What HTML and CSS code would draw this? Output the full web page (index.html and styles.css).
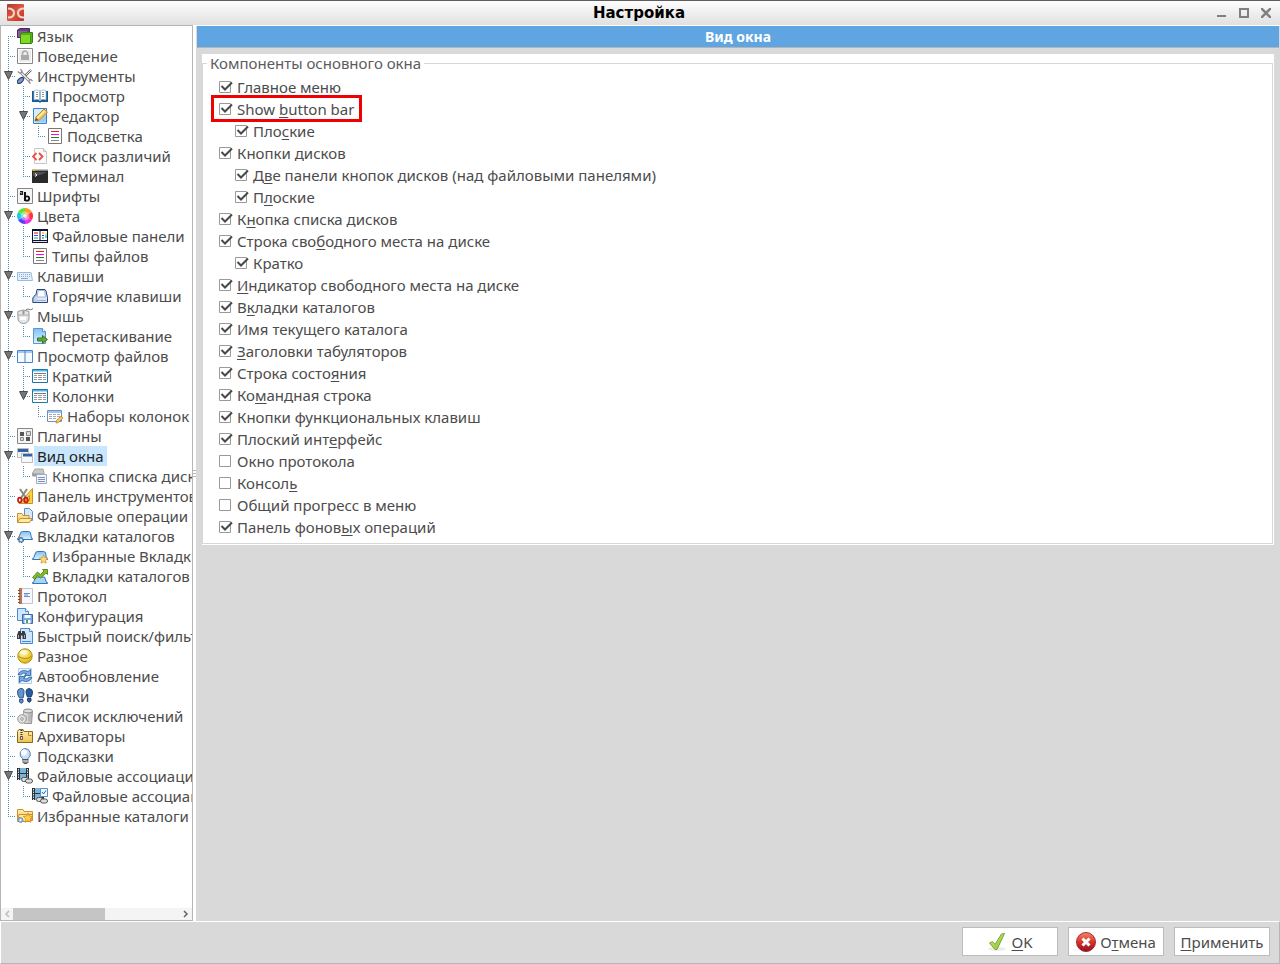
FILE: index.html
```html
<!DOCTYPE html>
<html lang="ru">
  <head>
    <meta charset="UTF-8" />
    <meta name="viewport" content="width=device-width, initial-scale=1.0" />
    <title>Настройка</title>
    <link rel="stylesheet" href="styles.css">
  </head>
  <body>
    <!-- icon set, 16x16 -->
    <svg class="icon-defs" width="0" height="0">
      <defs>
        <linearGradient id="gRed" x1="0" y1="0" x2="0" y2="1"><stop offset="0" stop-color="#f08a6a"/><stop offset=".5" stop-color="#d8332c"/><stop offset="1" stop-color="#8c1024"/></linearGradient>
        <linearGradient id="gApp" x1="0" y1="0" x2="1" y2="1"><stop offset="0" stop-color="#a8382c"/><stop offset=".5" stop-color="#e0543c"/><stop offset="1" stop-color="#b83020"/></linearGradient>
        <linearGradient id="gGreen" x1="0" y1="0" x2="1" y2="1"><stop offset="0" stop-color="#d8f070"/><stop offset="1" stop-color="#8aba34"/></linearGradient>
        <linearGradient id="gBlue" x1="0" y1="0" x2="0" y2="1"><stop offset="0" stop-color="#7fc0f4"/><stop offset="1" stop-color="#e0f2ff"/></linearGradient>
        <linearGradient id="gGrey" x1="0" y1="0" x2="1" y2="0"><stop offset="0" stop-color="#f4f4f4"/><stop offset="1" stop-color="#a8a8a8"/></linearGradient>
        <linearGradient id="gFolder" x1="0" y1="0" x2="0" y2="1"><stop offset="0" stop-color="#fff0b4"/><stop offset="1" stop-color="#f0c050"/></linearGradient>
        <radialGradient id="gYellow" cx=".4" cy=".3" r=".7"><stop offset="0" stop-color="#fff9a0"/><stop offset="1" stop-color="#e0b410"/></radialGradient>
      </defs>
      <symbol id="language" viewBox="0 0 16 16"><path d="M.5 2 3 .5h9.500v9H.5z" fill="#6a3f80" stroke="#4a2860"/><path d="M1 3h9v6H1z" fill="#8d5a9a"/><path d="M3.500 6 5.500 4.500h10V14l-1 1.500h-11z" fill="#58b018" stroke="#3a8010"/><path d="M4 7h9v8H4z" fill="#80d828"/><path d="M13.500 6.500V15" stroke="#4a9a14"/></symbol>
      <symbol id="lock" viewBox="0 0 16 16"><path d="M.5.5h15v15H.5z" fill="#ececec" stroke="#888"/><path d="M1.500 1.500h13v13h-13z" fill="none" stroke="#fff"/><path d="M4 7h8v5H4z" fill="#aaa"/><path d="M5.500 7V5.500a2.500 2.500 0 0 1 5 0V7" fill="none" stroke="#aaa" stroke-width="1.500"/></symbol>
      <symbol id="tools" viewBox="0 0 16 16"><path d="M14 2 6 10" stroke="#666" stroke-width="2.400"/><path d="M14 2 6 10" stroke="#eee" stroke-width="1"/><path d="M3.500 4 12.500 13" stroke="#777" stroke-width="3"/><path d="M3.500 4 12.500 13" stroke="#f0f0f0" stroke-width="1.500"/><path d="M.8 3.500 2.500 5q2.500.5 2.500-2L3.500 1M15.500 13 14 11.500q-2.500 0-2 2.500l1.500 1.500" fill="none" stroke="#888" stroke-width="1.200"/><ellipse cx="3.500" cy="12.500" rx="3.800" ry="2.100" transform="rotate(-42 3.500 12.500)" fill="#7898c8" stroke="#243c68"/></symbol>
      <symbol id="book" viewBox="0 0 16 16"><path d="M0 3h16v11H9l-1 1-1-1H0z" fill="#1c5a8e"/><path d="M2 2.500Q5 1 8 3v9.500Q5 10.500 2 12zM14 2.500Q11 1 8 3v9.500q3-2 6-.5z" fill="#fff" stroke="#88b4d4" stroke-width=".7"/><path d="M4 4.500h2m-2 2h2m-2 2h2m4-4h2m-2 2h2m-2 2h2" stroke="#999"/><path d="M8 3v10" stroke="#8aa"/></symbol>
      <symbol id="edit" viewBox="0 0 16 16"><path d="M1.500.5h13v15h-13z" fill="#d6ebfd" stroke="#3f82c4"/><path d="M3 14.500 14 6v8.500z" fill="#9ccaf2"/><path d="m3 13 1-4 8-8 3.500 3-8 8z" fill="#f4c85c" stroke="#c08820"/><path d="m5.500 10 7-7" stroke="#fff0b0" stroke-width="1.500"/><path d="m3 13 1-3 2.500 2z" fill="#7a4a20"/></symbol>
      <symbol id="lines" viewBox="0 0 16 16"><path d="M1.500.5h13v15h-13z" fill="#fff" stroke="#777"/><path d="M4 3.500h8" stroke="#f02020"/><path d="M4 6.500h8" stroke="#f0f"/><path d="M4 9.500h8" stroke="#188818"/><path d="M4 12.500h8" stroke="#888"/></symbol>
      <symbol id="diff" viewBox="0 0 16 16"><path d="M2.500.5h9l3 3v12h-12z" fill="#fafafa" stroke="#c8c8c8"/><path d="M11.500.5v3h3" fill="#ddd" stroke="#c8c8c8"/><path d="M4.500 5 1 8.500 4.500 12M7 5l3.500 3.500L7 12" fill="none" stroke="#ee4c48" stroke-width="1.800"/></symbol>
      <symbol id="terminal" viewBox="0 0 16 16"><path d="M0 2h16v13H0z" fill="#2b2b2b"/><path d="M0 1.500h16V3H0z" fill="#888"/><path d="M1 1h2v2H1z" fill="#e8c020"/><path d="M1 8Q8 8 15 4H1z" fill="#505050"/><path d="m3 5.500 2 1.500-2 1.500" fill="none" stroke="#fff"/></symbol>
      <symbol id="fonts" viewBox="0 0 16 16"><path d="M.5.5h15v15H.5z" fill="#f4f4f4" stroke="#888"/><path d="M3 3.500h2.500v3.500M5.500 5H3.500v1.500h2" fill="none" stroke="#222" stroke-width="1.200"/><path d="M8 4v9" stroke="#111" stroke-width="2"/><circle cx="10" cy="10.500" r="2.200" fill="none" stroke="#111" stroke-width="1.800"/></symbol>
      <symbol id="colors" viewBox="0 0 16 16"><path d="M8 8V0a8 8 0 0 1 6.900 4z" fill="#ff9a28"/><path d="m8 8 6.900-4a8 8 0 0 1 0 8z" fill="#ff3048"/><path d="m8 8 6.900 4A8 8 0 0 1 8 16z" fill="#f42ce0"/><path d="M8 8v8a8 8 0 0 1-6.900-4z" fill="#5a40f0"/><path d="m8 8-6.900 4a8 8 0 0 1 0-8z" fill="#20c8e8"/><path d="M8 8 1.100 4A8 8 0 0 1 8 0z" fill="#58e830"/><circle cx="8" cy="8" r="4.500" fill="#fff" opacity=".4"/><circle cx="8" cy="8" r="2" fill="#fff" opacity=".7"/></symbol>
      <symbol id="panels" viewBox="0 0 16 16"><path d="M.5 1.500h15v13H.5z" fill="#fff" stroke="#111136"/><path d="M0 1h16v2H0zM0 12h16v3H0z" fill="#111136"/><path d="M8 2v11" stroke="#111136"/><path d="M1 13.500h14" stroke="#ddd"/><path d="M2 5h4" stroke="#e00"/><path d="M2 7.500h4" stroke="#4b4bff"/><path d="M2 10h4" stroke="#0a8"/><path d="M10 5h2" stroke="#e80"/><path d="M10 7.500h2" stroke="#22f"/><path d="M10 10h2" stroke="#080"/><path d="M13 5h2v2h-2z" fill="#fe2"/><path d="M13 7h2v3h-2z" fill="#6cf"/></symbol>
      <symbol id="keyboard" viewBox="0 0 16 16"><path d="M.5 4.500H14l1.500 8H.5z" fill="#e4effb" stroke="#9abade"/><path d="M2 6.500h11M2 8.500h12" stroke="#88a8cc" stroke-dasharray="1 1"/><path d="M4 10.500h7" stroke="#88a8cc"/></symbol>
      <symbol id="hotkeys" viewBox="0 0 16 16"><path d="M5 1.500h8l1 1.500 1.500 6.500v5H3.500V9z" fill="#dce8f8" stroke="#24487c"/><path d="M6 2.500h6.500l1 6.500h-8.500z" fill="#fff" stroke="#a4b8d8"/><path d="M3.500 6.500.8 10v4.500h5" fill="#bcd0ec" stroke="#24487c"/><path d="M5 12.500h9" stroke="#9ab0d0"/></symbol>
      <symbol id="mouse" viewBox="0 0 16 16"><path d="M10 3q-2-2 1-2 3 2 5-.5" fill="none" stroke="#777"/><path d="M.8 3.500Q6 .5 12 3.500V11q-1 4.500-5.500 4.500T1 11z" fill="#e6e6e6" stroke="#999"/><path d="M1 7h11M6.500 2v5" stroke="#aaa"/><path d="M5.500 3h2v3h-2z" fill="#999"/><path d="M3 9h6v3H3z" fill="#fff"/></symbol>
      <symbol id="drag" viewBox="0 0 16 16"><path d="M1.500.5h9l3 3v12h-12z" fill="url(#gBlue)" stroke="#5a96d4"/><path d="M10.500.5v3h3" fill="#fff" stroke="#5a96d4"/><path d="M5.500 10h5V7.500l5 4-5 4V13h-5z" fill="#62a838" stroke="#38741c"/></symbol>
      <symbol id="view" viewBox="0 0 16 16"><path d="M.5 2.500h15v12H.5z" fill="#f6faff" stroke="#4a84c8"/><path d="M1 3h14v2H1z" fill="#a4c8f0"/><path d="M8 3v11" stroke="#4a84c8"/></symbol>
      <symbol id="columns" viewBox="0 0 16 16"><path d="M.5 1.500h15v13H.5z" fill="#fff" stroke="#1c78a8"/><path d="M1 2h14v1.500H1z" fill="#58b4e4"/><path d="M2 5.500h12" stroke="#777"/><path d="M2 7.500h3m1 0h4m1 0h3M2 9.500h3m1 0h4m1 0h3M2 11.500h3m1 0h4m1 0h3" stroke="#999"/></symbol>
      <symbol id="colsets" viewBox="0 0 16 16"><path d="M.5 2.500h14v11H.5z" fill="#fff" stroke="#6a94c8"/><path d="M1 3h13v2H1z" fill="#a4c4ec"/><path d="M2 6.500h3m1 0h3m1 0h3M2 8.500h3m1 0h3m1 0h3M2 10.500h3m1 0h3" stroke="#aab"/><path d="m9 15 .5-2.500L14 8l2 2-4.500 4.500z" fill="#f4c85c" stroke="#b88428" stroke-width=".8"/></symbol>
      <symbol id="plugins" viewBox="0 0 16 16"><path d="M.5.5h15v15H.5z" fill="#f4f4f4" stroke="#888"/><path d="M3 4h4v4H3z" fill="#555"/><path d="M9.500 3.500h4v4h-4zM3.500 9.500h3v3h-3z" fill="#ddd" stroke="#888"/><path d="M9 9h4v4H9z" fill="#555"/></symbol>
      <symbol id="windows" viewBox="0 0 16 16"><path d="M.5.5h11v9H.5z" fill="#f2f2f2" stroke="#bbb"/><path d="M1 1h10v3H1z" fill="#2f62a8"/><path d="M4.500 5.500h11v9h-11z" fill="#f8f8f8" stroke="#bbb"/><path d="M6 6h9v2.500H6z" fill="#2f62a8"/></symbol>
      <symbol id="drives" viewBox="0 0 16 16"><path d="m.5 5 2.500-4h8l1 4v3H.5z" fill="#c8c8c8" stroke="#a4a4a4"/><path d="M1 5.500h10V8H1z" fill="#999"/><path d="M4.500 6.500h10v9h-10z" fill="#f4f4ff" stroke="#a0acc4"/><path d="M6 9.500h7m-7 2h7m-7 2h7" stroke="#8090b4"/></symbol>
      <symbol id="toolbar" viewBox="0 0 16 16"><path d="M15.500.5v15H2z" fill="#f8d040" stroke="#c89418"/><path d="M12.500 7.500v5h-4z" fill="#fff" stroke="#c89418"/><path d="M3 1l6 9M10 1 4 10" stroke="#888" stroke-width="2"/><ellipse cx="2.800" cy="12" rx="1.800" ry="2.400" fill="none" stroke="#c81c1c" stroke-width="1.800"/><ellipse cx="9" cy="12" rx="1.800" ry="2.400" fill="none" stroke="#c81c1c" stroke-width="1.800"/></symbol>
      <symbol id="fileops" viewBox="0 0 16 16"><path d="M7.500.5h5l3 3v9h-8z" fill="#d4e8fc" stroke="#5a90cc"/><path d="M.5 5.500H5l1 2h6v7H.5z" fill="url(#gFolder)" stroke="#c89030"/><path d="M3 10.500h12l-2.500 4H.5z" fill="#ffeaa0" stroke="#c89030"/></symbol>
      <symbol id="tabs" viewBox="0 0 16 16"><path d="M.5 10.500h1L3.500 5q.5-1.500 2-1.500h6q1.500 0 2 1.500l1 5.500h1v1H.5z" fill="url(#gBlue)" stroke="#2f78bc"/><circle cx="4" cy="12" r="2.600" fill="#6898c8" stroke="#2c5484" stroke-dasharray="1.500 1"/><circle cx="4" cy="12" r="1" fill="#fff"/><path d="M1 9.500 3 9" stroke="#d07820" stroke-width="1.500"/></symbol>
      <symbol id="favtabs" viewBox="0 0 16 16"><path d="M.5 10.500h1L3.500 5q.5-1.500 2-1.500h6q1.500 0 2 1.500l1 5.500h1v1H.5z" fill="url(#gBlue)" stroke="#2f78bc"/><path d="m11.500 7 1.300 2.700 3 .4-2.200 2.100.5 3-2.600-1.400L9 15.200l.5-3-2.200-2.100 3-.4z" fill="#ffdc70" stroke="#d49428" stroke-width=".8"/></symbol>
      <symbol id="foldertabs" viewBox="0 0 16 16"><path d="M.5 14.500h1L3.500 9h9l2 5.500h1v1H.5z" fill="#a8d4f4" stroke="#2f78bc"/><path d="m.5 9.500 5-5.500 3 2.500L12 3l-1.500-1.500H15.500V6.500L14 5 8.500 10l-3-2.500-2.500 4z" fill="#80c024" stroke="#44760c" stroke-width=".8"/></symbol>
      <symbol id="protocol" viewBox="0 0 16 16"><path d="M2.500.5h13v15h-13z" fill="#f6f8fc" stroke="#c4c4cc"/><path d="M2 0h3v16H2z" fill="#b87850"/><path d="M1 2.500h2m-2 3h2m-2 3h2m-2 3h2m-2 3h2" stroke="#774430"/><path d="M7 5.500h6m-6 3h6M7 7h4" stroke="#6a90cc"/></symbol>
      <symbol id="config" viewBox="0 0 16 16"><path d="M.5.5h8l3 3v9H.5z" fill="#d0e6fc" stroke="#4a8cd0"/><path d="M8.500.5v3h3" fill="#fff" stroke="#4a8cd0"/><path d="M5.500 6.500h10v9h-10z" fill="#78a8e0" stroke="#386cb0"/><path d="M7.500 7h6v3h-6zM7.500 12h6v3.500h-6z" fill="#fff"/><path d="M9 12h2v3H9z" fill="#58a048"/></symbol>
      <symbol id="search" viewBox="0 0 16 16"><path d="M3.500.5h9l3 3v12h-12z" fill="#d0e6fc" stroke="#4a8cd0"/><path d="M12.500.5v3h3" fill="#fff" stroke="#4a8cd0"/><path d="M5 13.500h9" stroke="#4a8cd0"/><path d="M1.500 3h2.500v2h1V3h2.500l1.500 4v4H5.500V7.500H4V11H0V7z" fill="#3a3a44"/><path d="M1.500 7v3m6-3v3" stroke="#aab"/></symbol>
      <symbol id="misc" viewBox="0 0 16 16"><circle cx="8" cy="8" r="7.200" fill="url(#gYellow)" stroke="#b48c10"/><path d="M1.500 8.500q6.500 4 13 0" stroke="#b88c08" fill="none"/><ellipse cx="7" cy="4.500" rx="4" ry="2.300" fill="#fff" opacity=".65"/></symbol>
      <symbol id="update" viewBox="0 0 16 16"><path d="M1.500.5h13v15h-13z" fill="#eaf4ff" stroke="#b4d0ee"/><path d="M1 6.500Q4.500.5 11 3.500L13.500 1.500v6h-6l2-2Q6 4 3.500 7zM15 9.500q-3.500 6-10 3l-2.500 2v-6h6l-2 2q3.500 1.500 6-1.500z" fill="#7aaee4" stroke="#2a5c98" stroke-width=".8"/></symbol>
      <symbol id="feet" viewBox="0 0 16 16"><path d="M3.500.5Q7 0 7 4q0 3-1 6H2.500Q.5 7 .5 4t3-3.500z" fill="#6494cc" stroke="#285488"/><path d="M2.500 11.500H6v2.500q-1.800 2.500-3.500 0z" fill="#6494cc" stroke="#285488"/><path d="M12 .5q3.500.5 3.500 3.500T14 9h-3.500q-1.500-3-1.500-5.500T12 .5z" fill="#285c9c" stroke="#1c3c70"/><path d="M10.500 10.500H14V13q-1.800 2.500-3.500 0z" fill="#285c9c" stroke="#1c3c70"/></symbol>
      <symbol id="ignore" viewBox="0 0 16 16"><path d="M6.500 3.500h9l-1 12h-7z" fill="url(#gGrey)" stroke="#999"/><ellipse cx="11" cy="3" rx="4.500" ry="2" fill="#ddd" stroke="#888"/><path d="M9 7v6m3-6v6" stroke="#aaa"/><circle cx="5" cy="11" r="4.300" fill="#e0e0e0" stroke="#999"/><circle cx="5" cy="11" r="1.300" fill="#fff" stroke="#999"/></symbol>
      <symbol id="archive" viewBox="0 0 16 16"><path d="M.5 3.500 2 1.500h4l1 2h8.500v11H.5z" fill="url(#gFolder)" stroke="#8c6818"/><path d="M11.500 4v3.500h3" fill="none" stroke="#b48828"/><path d="M4.500 2v8" stroke="#333" stroke-width="2" stroke-dasharray="1 1"/><path d="M3.500 8.500h2v3h-2z" fill="#ddd" stroke="#444" stroke-width=".8"/></symbol>
      <symbol id="bulb" viewBox="0 0 16 16"><path d="M8 .5a5.500 5.500 0 0 1 3 10V12H5.500v-1.500A5.500 5.500 0 0 1 8 .5z" fill="#c8defa" stroke="#5c7cb4"/><ellipse cx="7" cy="4.500" rx="3" ry="3" fill="#fff"/><path d="M6 11.500h5v3l-1 1H7l-1-1z" fill="#888" stroke="#444" stroke-width=".8"/><path d="M6 13h5" stroke="#ddd"/></symbol>
      <symbol id="assoc" viewBox="0 0 16 16"><path d="M0 0h12v12H0z" fill="#2c3438"/><path d="M3 0h6v5H3zM3 6h6v6H3z" fill="#78b4dc"/><path d="M1.500 1v11m9-11v11" stroke="#ddd" stroke-dasharray="1.500 1"/><rect x="4.500" y="9.500" width="7" height="4" rx="2" fill="#ddd" stroke="#555"/><rect x="8.500" y="11" width="7" height="4" rx="2" fill="#ddd" stroke="#555"/></symbol>
      <symbol id="assoc2" viewBox="0 0 16 16"><path d="M0 0h12v12H0z" fill="#2c3438"/><path d="M3 0h6v5H3zM3 6h6v6H3z" fill="#78b4dc"/><path d="M1.500 1v11" stroke="#ddd" stroke-dasharray="1.500 1"/><path d="M8.500.5h7v8h-7z" fill="#f4faff" stroke="#5a90c0"/><path d="m10 4 1.500 2L14 2.500" fill="none" stroke="#2a64b0"/><rect x="4.500" y="9.500" width="6" height="4" rx="2" fill="#ddd" stroke="#555"/><rect x="8.500" y="11" width="7" height="4" rx="2" fill="#ddd" stroke="#555"/></symbol>
      <symbol id="favdirs" viewBox="0 0 16 16"><path d="M.5 1.500H6l1 2h8.500v9H.5z" fill="url(#gFolder)" stroke="#d09030"/><path d="M2 6.500h13.500l-2 7H.5z" fill="#ffeaa0" stroke="#d09030"/><path d="m11 5 1.400 3 3.300.4-2.400 2.400.6 3.500-2.900-1.700-3 1.700.7-3.500-2.500-2.400L9.600 8z" fill="#ffd050" stroke="#d08820" stroke-width=".8"/><circle cx="3.500" cy="12" r="2.500" fill="#88b8e4" stroke="#3c78b4" stroke-dasharray="1.500 1"/><circle cx="3.500" cy="12" r="1" fill="#fff"/></symbol>
      <symbol id="caret" viewBox="0 0 10 10"><path d="M.5.5h8L4.500 8.500z" fill="#777" stroke="#4c4c4c"/></symbol>
    </svg>

    <header class="titlebar">
      <svg class="app-icon" viewBox="0 0 18 18"><rect width="17" height="17" rx="1" fill="url(#gApp)"/><path d="M1 4.500q6 0 6 4.500t-6 4.500M17 4.500q-6 0-6 4.500t6 4.500" fill="none" stroke="#f0d8d0" stroke-width="2"/></svg>
      <h1>Настройка</h1>
      <div class="window-buttons">
        <button type="button" aria-label="Свернуть"><svg viewBox="0 0 10 10"><path d="M0 7h9v2H0z" fill="#808080"/></svg></button>
        <button type="button" aria-label="Развернуть"><svg viewBox="0 0 10 10"><path d="M1 1h8v8H1z" fill="none" stroke="#808080" stroke-width="2"/></svg></button>
        <button type="button" aria-label="Закрыть"><svg viewBox="0 0 10 10"><path d="m0 0 10 10M10 0 0 10" stroke="#808080" stroke-width="2.500"/></svg></button>
      </div>
    </header>

    <main class="content">
      <nav class="sidebar">
        <ul class="tree">
          <li><div class="node"><a href="#"><svg><use href="#language"/></svg><span>Язык</span></a></div></li>
          <li><div class="node"><a href="#"><svg><use href="#lock"/></svg><span>Поведение</span></a></div></li>
          <li>
            <div class="node"><button type="button" class="caret" aria-label="Свернуть ветку"><svg><use href="#caret"/></svg></button><a href="#"><svg><use href="#tools"/></svg><span>Инструменты</span></a></div>
            <ul>
              <li><div class="node"><a href="#"><svg><use href="#book"/></svg><span>Просмотр</span></a></div></li>
              <li>
                <div class="node"><button type="button" class="caret" aria-label="Свернуть ветку"><svg><use href="#caret"/></svg></button><a href="#"><svg><use href="#edit"/></svg><span>Редактор</span></a></div>
                <ul>
                  <li><div class="node"><a href="#"><svg><use href="#lines"/></svg><span>Подсветка</span></a></div></li>
                </ul>
              </li>
              <li><div class="node"><a href="#"><svg><use href="#diff"/></svg><span>Поиск различий</span></a></div></li>
              <li><div class="node"><a href="#"><svg><use href="#terminal"/></svg><span>Терминал</span></a></div></li>
            </ul>
          </li>
          <li><div class="node"><a href="#"><svg><use href="#fonts"/></svg><span>Шрифты</span></a></div></li>
          <li>
            <div class="node"><button type="button" class="caret" aria-label="Свернуть ветку"><svg><use href="#caret"/></svg></button><a href="#"><svg><use href="#colors"/></svg><span>Цвета</span></a></div>
            <ul>
              <li><div class="node"><a href="#"><svg><use href="#panels"/></svg><span>Файловые панели</span></a></div></li>
              <li><div class="node"><a href="#"><svg><use href="#lines"/></svg><span>Типы файлов</span></a></div></li>
            </ul>
          </li>
          <li>
            <div class="node"><button type="button" class="caret" aria-label="Свернуть ветку"><svg><use href="#caret"/></svg></button><a href="#"><svg><use href="#keyboard"/></svg><span>Клавиши</span></a></div>
            <ul>
              <li><div class="node"><a href="#"><svg><use href="#hotkeys"/></svg><span>Горячие клавиши</span></a></div></li>
            </ul>
          </li>
          <li>
            <div class="node"><button type="button" class="caret" aria-label="Свернуть ветку"><svg><use href="#caret"/></svg></button><a href="#"><svg><use href="#mouse"/></svg><span>Мышь</span></a></div>
            <ul>
              <li><div class="node"><a href="#"><svg><use href="#drag"/></svg><span>Перетаскивание</span></a></div></li>
            </ul>
          </li>
          <li>
            <div class="node"><button type="button" class="caret" aria-label="Свернуть ветку"><svg><use href="#caret"/></svg></button><a href="#"><svg><use href="#view"/></svg><span>Просмотр файлов</span></a></div>
            <ul>
              <li><div class="node"><a href="#"><svg><use href="#columns"/></svg><span>Краткий</span></a></div></li>
              <li>
                <div class="node"><button type="button" class="caret" aria-label="Свернуть ветку"><svg><use href="#caret"/></svg></button><a href="#"><svg><use href="#columns"/></svg><span>Колонки</span></a></div>
                <ul>
                  <li><div class="node"><a href="#"><svg><use href="#colsets"/></svg><span>Наборы колонок</span></a></div></li>
                </ul>
              </li>
            </ul>
          </li>
          <li><div class="node"><a href="#"><svg><use href="#plugins"/></svg><span>Плагины</span></a></div></li>
          <li>
            <div class="node selected"><button type="button" class="caret" aria-label="Свернуть ветку"><svg><use href="#caret"/></svg></button><a href="#"><svg><use href="#windows"/></svg><span>Вид окна</span></a></div>
            <ul>
              <li><div class="node"><a href="#"><svg><use href="#drives"/></svg><span>Кнопка списка дисков</span></a></div></li>
            </ul>
          </li>
          <li><div class="node"><a href="#"><svg><use href="#toolbar"/></svg><span>Панель инструментов</span></a></div></li>
          <li><div class="node"><a href="#"><svg><use href="#fileops"/></svg><span>Файловые операции</span></a></div></li>
          <li>
            <div class="node"><button type="button" class="caret" aria-label="Свернуть ветку"><svg><use href="#caret"/></svg></button><a href="#"><svg><use href="#tabs"/></svg><span>Вкладки каталогов</span></a></div>
            <ul>
              <li><div class="node"><a href="#"><svg><use href="#favtabs"/></svg><span>Избранные Вкладки</span></a></div></li>
              <li><div class="node"><a href="#"><svg><use href="#foldertabs"/></svg><span>Вкладки каталогов</span></a></div></li>
            </ul>
          </li>
          <li><div class="node"><a href="#"><svg><use href="#protocol"/></svg><span>Протокол</span></a></div></li>
          <li><div class="node"><a href="#"><svg><use href="#config"/></svg><span>Конфигурация</span></a></div></li>
          <li><div class="node"><a href="#"><svg><use href="#search"/></svg><span>Быстрый поиск/фильтр</span></a></div></li>
          <li><div class="node"><a href="#"><svg><use href="#misc"/></svg><span>Разное</span></a></div></li>
          <li><div class="node"><a href="#"><svg><use href="#update"/></svg><span>Автообновление</span></a></div></li>
          <li><div class="node"><a href="#"><svg><use href="#feet"/></svg><span>Значки</span></a></div></li>
          <li><div class="node"><a href="#"><svg><use href="#ignore"/></svg><span>Список исключений</span></a></div></li>
          <li><div class="node"><a href="#"><svg><use href="#archive"/></svg><span>Архиваторы</span></a></div></li>
          <li><div class="node"><a href="#"><svg><use href="#bulb"/></svg><span>Подсказки</span></a></div></li>
          <li>
            <div class="node"><button type="button" class="caret" aria-label="Свернуть ветку"><svg><use href="#caret"/></svg></button><a href="#"><svg><use href="#assoc"/></svg><span>Файловые ассоциации</span></a></div>
            <ul>
              <li><div class="node"><a href="#"><svg><use href="#assoc2"/></svg><span>Файловые ассоциации</span></a></div></li>
            </ul>
          </li>
          <li><div class="node"><a href="#"><svg><use href="#favdirs"/></svg><span>Избранные каталоги</span></a></div></li>
        </ul>
        <div class="scrollbar">
          <svg viewBox="0 0 12 12"><path d="M8 3 5 6l3 3" fill="none" stroke="#bbb" stroke-width="1.500"/></svg>
          <div class="track"><div class="thumb"></div></div>
          <svg viewBox="0 0 12 12"><path d="m4 3 3 3-3 3" fill="none" stroke="#666" stroke-width="1.500"/></svg>
        </div>
      </nav>
      <div class="splitter"><i></i></div>
      <section class="page">
        <h2>Вид окна</h2>
        <div class="panel">
          <fieldset>
            <legend>Компоненты основного окна</legend>
            <div class="options">
              <label><input type="checkbox" checked /><span><u>Г</u>лавное меню</span></label>
              <label class="marked"><input type="checkbox" checked /><span>Show <u>b</u>utton bar</span></label>
              <label class="sub"><input type="checkbox" checked /><span>Пло<u>с</u>кие</span></label>
              <label><input type="checkbox" checked /><span>Кнопки дисков</span></label>
              <label class="sub"><input type="checkbox" checked /><span>Д<u>в</u>е панели кнопок дисков (над файловыми панелями)</span></label>
              <label class="sub"><input type="checkbox" checked /><span>П<u>л</u>оские</span></label>
              <label><input type="checkbox" checked /><span>К<u>н</u>опка списка дисков</span></label>
              <label><input type="checkbox" checked /><span>Строка сво<u>б</u>одного места на диске</span></label>
              <label class="sub"><input type="checkbox" checked /><span>Кратко</span></label>
              <label><input type="checkbox" checked /><span><u>И</u>ндикатор свободного места на диске</span></label>
              <label><input type="checkbox" checked /><span>В<u>к</u>ладки каталогов</span></label>
              <label><input type="checkbox" checked /><span>Имя текущего каталога</span></label>
              <label><input type="checkbox" checked /><span><u>З</u>аголовки табуляторов</span></label>
              <label><input type="checkbox" checked /><span>Строка состо<u>я</u>ния</span></label>
              <label><input type="checkbox" checked /><span>Ко<u>м</u>андная строка</span></label>
              <label><input type="checkbox" checked /><span>Кнопки функциональных клавиш</span></label>
              <label><input type="checkbox" checked /><span>Плоский инт<u>е</u>рфейс</span></label>
              <label><input type="checkbox" /><span>Окно протокола</span></label>
              <label><input type="checkbox" /><span>Консол<u>ь</u></span></label>
              <label><input type="checkbox" /><span>Общий прогресс в меню</span></label>
              <label><input type="checkbox" checked /><span>Панель фонов<u>ы</u>х операций</span></label>
            </div>
          </fieldset>
        </div>
      </section>
    </main>

    <footer class="actions">
      <button type="button"><svg viewBox="0 0 20 20"><ellipse cx="10" cy="17" rx="9" ry="2" fill="#ececec"/><path d="m2.500 11 3-1.500 2.500 3L14.500 2l3-.5L10 17.500H8z" fill="url(#gGreen)" stroke="#7aa838"/></svg><span><u>O</u>K</span></button>
      <button type="button"><svg viewBox="0 0 20 20"><circle cx="10" cy="10" r="9.500" fill="url(#gRed)" stroke="#b02828"/><path d="m6.500 6.500 7 7m0-7-7 7" stroke="#fff" stroke-width="3"/></svg><span>О<u>т</u>мена</span></button>
      <button type="button"><span><u>П</u>рименить</span></button>
    </footer>
  </body>
</html>
```
FILE: styles.css
```css
* {
  box-sizing: border-box;
}
body {
  margin: 0;
  height: 100vh;
  display: flex;
  flex-direction: column;
  background-color: #fff;
  color: #4c4c4c;
  font-family: "Noto Sans", "Open Sans", sans-serif;
  font-size: 15px;
  line-height: 20px;
}
button {
  font: inherit;
  color: inherit;
  border: none;
  background: none;
  padding: 0;
  cursor: pointer;
}
u {
  text-decoration: underline;
  text-underline-offset: 2px;
  text-decoration-thickness: 1px;
  text-decoration-skip-ink: none;
}
.icon-defs {
  position: absolute;
}

/* Title bar */
.titlebar {
  display: grid;
  grid-template-columns: 1fr auto 1fr;
  align-items: center;
  height: 25px;
  padding: 0 9px 0 7px;
  border-top: 1px solid #5e5c5e;
  background: linear-gradient(#fdfdfd, #e0e0e0);
}
.app-icon {
  width: 18px;
  height: 18px;
}
.titlebar h1 {
  margin: 0;
  color: #000;
  font-family: "DejaVu Sans", sans-serif;
  font-size: 15px;
  font-weight: bold;
}
.window-buttons {
  display: flex;
  justify-content: flex-end;
  gap: 12px;
}
.window-buttons svg {
  display: block;
  width: 10px;
  height: 10px;
}

.content {
  display: flex;
  flex: 1;
  min-height: 0;
}

/* Tree */
.sidebar {
  display: flex;
  flex-direction: column;
  width: 193px;
  flex-shrink: 0;
  border: 1px solid #b5b5b5;
  background-color: #fff;
}
.tree {
  flex: 1;
  overflow: hidden;
}
.tree,
.tree ul {
  list-style: none;
  margin: 0;
  padding: 0;
}
.tree ul {
  margin-left: 15px;
}
.tree li {
  background-image:
    repeating-linear-gradient(to bottom, #4f8fb8 0 1px, transparent 1px 2px),
    repeating-linear-gradient(to right, #4f8fb8 0 1px, transparent 1px 2px);
  background-position: 7px 0, 7px 10px;
  background-size: 1px 100%, 8px 1px;
  background-repeat: no-repeat;
}
.tree li:last-child {
  background-size: 1px 10px, 8px 1px;
}
.tree > li:first-child {
  background-position: 7px 10px, 7px 10px;
}
.node {
  display: flex;
  align-items: center;
  height: 20px;
  padding-left: 3px;
}
.node a {
  display: flex;
  align-items: center;
  margin-left: 13px;
  color: inherit;
  text-decoration: none;
  white-space: nowrap;
}
.node a svg {
  flex-shrink: 0;
  width: 16px;
  height: 16px;
}
.node a span {
  margin-left: 1px;
  padding: 0 3px;
}
.caret {
  width: 10px;
  height: 10px;
  flex-shrink: 0;
}
.caret svg {
  display: block;
  width: 10px;
  height: 10px;
}
.caret + a {
  margin-left: 3px;
}
.selected span {
  background-color: #c9e6ff;
  color: #222;
}

.scrollbar {
  display: flex;
  height: 12px;
  background-color: #f4f4f4;
}
.scrollbar svg {
  width: 12px;
  height: 12px;
}
.track {
  flex: 1;
}
.thumb {
  width: 55%;
  height: 12px;
  background-color: #c5c5c5;
}

.splitter {
  display: flex;
  align-items: center;
  width: 3px;
}
.splitter i {
  width: 3px;
  height: 7px;
  background: repeating-linear-gradient(#b5b5b5 0 1px, #fff 1px 3px);
}

/* Options page */
.page {
  flex: 1;
  padding: 0 1px;
  border-top: 1px solid #fff;
  background-color: #d9d9d9;
}
.page h2 {
  margin: 0;
  height: 22px;
  border-bottom: 1px solid #b5b5b5;
  background-color: #5fa5e1;
  color: #fff;
  font-size: 14px;
  line-height: 21px;
  text-align: center;
}
.panel {
  margin: 6px 5px;
  padding: 0 1px 1px 0;
  background-color: #fff;
}
fieldset {
  margin: 0;
  padding: 4px 4px 5px;
  border: 1px solid #d8d8d8;
}
legend {
  padding: 0 3px;
  line-height: 18px;
  color: #5c5c5c;
}
.options {
  display: flex;
  flex-direction: column;
  align-items: flex-start;
  padding-left: 12px;
}
.options label {
  display: flex;
  align-items: center;
  gap: 4px;
  height: 22px;
}
.options .sub {
  margin-left: 16px;
}
.options input {
  appearance: none;
  width: 14px;
  height: 12px;
  margin: 0;
  background: url("data:image/svg+xml,%3Csvg xmlns='http://www.w3.org/2000/svg' width='14' height='12'%3E%3Cpath d='M.5.5h11v11H.5z' fill='%23fff' stroke='%23999'/%3E%3C/svg%3E") no-repeat;
}
.options input:checked {
  background-image: url("data:image/svg+xml,%3Csvg xmlns='http://www.w3.org/2000/svg' width='14' height='12'%3E%3Cpath d='M.5.5h11v11H.5z' fill='%23fff' stroke='%23999'/%3E%3Cpath d='M2.500 5 6 8.500 13 1.500' fill='none' stroke='%23484848' stroke-width='2'/%3E%3C/svg%3E");
}
.marked {
  position: relative;
}
.marked::after {
  content: "";
  position: absolute;
  inset: -3px -8px -2px;
  border: 3px solid #f00000;
}

/* Bottom buttons */
.actions {
  display: flex;
  justify-content: flex-end;
  gap: 10px;
  padding: 5px 9px 7px;
  border: 1px solid;
  border-color: #fff #b5b5b5 #b5b5b5 #fff;
  background-color: #d9d9d9;
}
.actions button {
  display: flex;
  align-items: center;
  justify-content: center;
  gap: 4px;
  width: 96px;
  height: 29px;
  border: 1px solid #bcbcbc;
  background-color: #fff;
}
.actions svg {
  width: 20px;
  height: 20px;
}
```
